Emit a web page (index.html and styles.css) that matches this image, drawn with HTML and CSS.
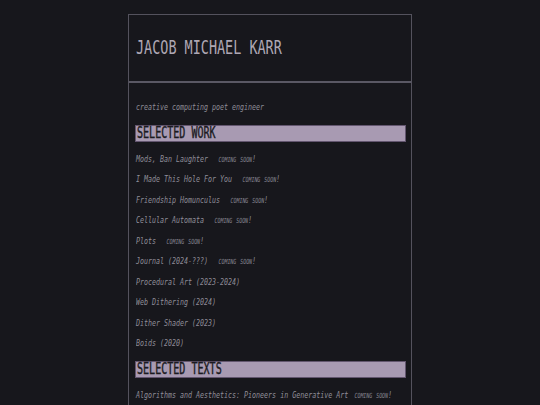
FILE: index.html
```html
<!DOCTYPE html>
<html>
<head>
<meta charset="utf-8">
<link rel="stylesheet" href="styles.css">
</head>
<body>
<div class="page">
  <header class="head">
    <h1 class="title"><span class="sx-title">JACOB MICHAEL KARR</span></h1>
  </header>
  <main class="content">
    <p class="tagline"><span class="sx">creative computing poet engineer</span></p>
    <h2 class="bar"><span class="sx-head">SELECTED WORK</span></h2>
    <ul class="list">
      <li><span class="sx">Mods, Ban Laughter<span class="tag">coming soon!</span></span></li>
      <li><span class="sx">I Made This Hole For You<span class="tag">coming soon!</span></span></li>
      <li><span class="sx">Friendship Homunculus<span class="tag">coming soon!</span></span></li>
      <li><span class="sx">Cellular Automata<span class="tag">coming soon!</span></span></li>
      <li><span class="sx">Plots<span class="tag">coming soon!</span></span></li>
      <li><span class="sx">Journal (2024-???)<span class="tag">coming soon!</span></span></li>
      <li><span class="sx">Procedural Art (2023-2024)</span></li>
      <li><span class="sx">Web Dithering (2024)</span></li>
      <li><span class="sx">Dither Shader (2023)</span></li>
      <li><span class="sx">Boids (2020)</span></li>
    </ul>
    <h2 class="bar"><span class="sx-head">SELECTED TEXTS</span></h2>
    <ul class="list">
      <li><span class="sx">Algorithms and Aesthetics: Pioneers in Generative Art<span class="tag tight">coming soon!</span></span></li>
    </ul>
  </main>
</div>
</body>
</html>
```
FILE: styles.css
```css
html, body {
  margin: 0;
  padding: 0;
  background: #17171c;
}
body {
  font-family: "DejaVu Sans Mono", monospace;
  padding-top: 14px;
}
.page {
  width: 282px;
  margin: 0 auto;
  border: 1px solid #54525d;
  border-bottom: none;
  min-height: 420px;
}
.head {
  height: 66px;
  display: flex;
  align-items: center;
  border-bottom: 2px solid #5a5864;
  padding-left: 7px;
}
.title {
  margin: 0;
  font-size: 19.5px;
  font-weight: normal;
  color: #aea7b4;
  line-height: 1;
  white-space: nowrap;
}
.sx-title {
  display: inline-block;
  transform: scaleX(0.69);
  transform-origin: left center;
}
.content {
  padding: 14px 5px 0 6px;
}
.sx {
  display: inline-block;
  transform: scaleX(0.7);
  transform-origin: left center;
  white-space: nowrap;
}
.tagline {
  margin: 0 0 7px 1px;
  font-size: 9.5px;
  line-height: 20.5px;
  font-style: italic;
  color: #8e8c96;
}
.bar {
  margin: 0;
  height: 15px;
  background: #a89ab2;
  border: 1px solid #63566f;
  font-size: 15px;
  font-weight: normal;
  line-height: 15px;
  color: #1b1a21;
  padding-left: 1px;
  white-space: nowrap;
}
.sx-head {
  display: inline-block;
  transform: scaleX(0.67);
  transform-origin: left center;
  -webkit-text-stroke: 0.4px #1b1a21;
}
.list {
  list-style: none;
  margin: 7px 0;
  padding: 0 0 0 1px;
}
.list li {
  font-size: 9.5px;
  line-height: 20.5px;
  font-style: italic;
  color: #8f8d98;
  white-space: nowrap;
}
.tag {
  font-variant: small-caps;
  margin-left: 15px;
  color: #8a8893;
}
.tag.tight {
  margin-left: 9px;
}
```
